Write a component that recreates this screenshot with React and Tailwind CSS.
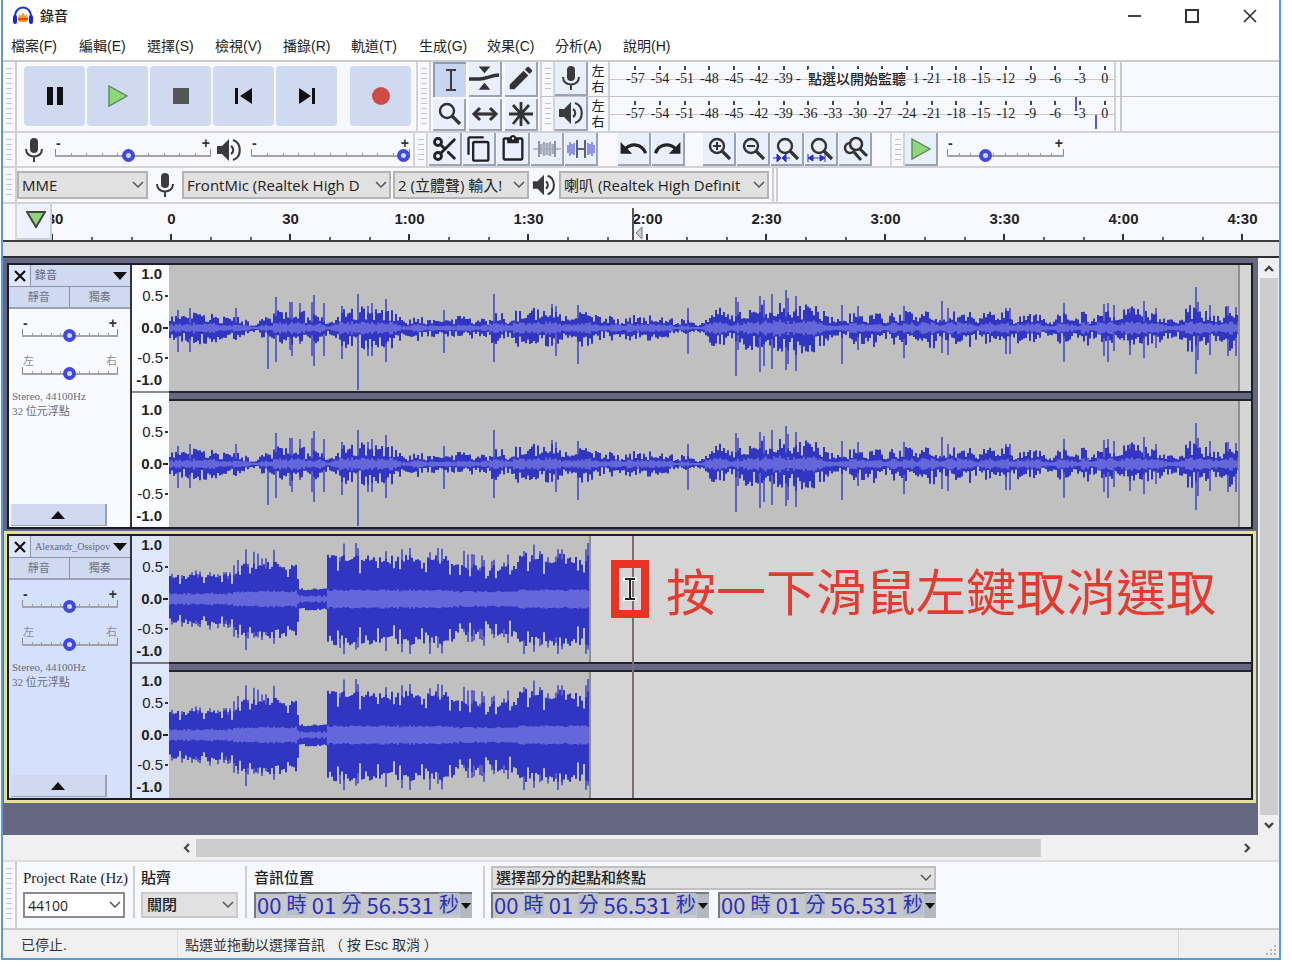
import React from "react";
import { MdContentCopy, MdContentPaste, MdEdit, MdRedo, MdUndo } from "react-icons/md";
import { Scissors } from "lucide-react";

const SANS = "font-['Liberation_Sans','Noto_Sans_CJK_TC',sans-serif]";
const SERIF = "font-['Liberation_Serif','Noto_Sans_CJK_TC',serif]";
const UI = "font-['Open_Sans','Noto_Sans_CJK_TC',sans-serif]";

/* ---------- waveform data ---------- */

function makeRandom(seed) {
  let s = seed;
  return () => {
    s = (s * 1664525 + 1013904223) % 4294967296;
    return s / 4294967296;
  };
}

function envelope(points, x) {
  for (let i = 1; i < points.length; i++) {
    if (x <= points[i][0]) {
      const [x0, y0] = points[i - 1];
      const [x1, y1] = points[i];
      return y0 + ((y1 - y0) * (x - x0)) / (x1 - x0);
    }
  }
  return points[points.length - 1][1];
}

const VOICE_ENV = [
  [0, 18], [20, 20], [30, 14], [75, 12], [87, 4], [92, 16], [120, 22], [130, 13], [152, 21], [158, 7],
  [175, 19], [210, 20], [222, 18], [230, 12], [270, 9], [320, 13], [370, 18], [410, 17], [450, 14],
  [490, 9], [530, 7], [542, 16], [565, 20], [620, 24], [660, 17], [730, 16], [800, 20], [808, 6],
  [815, 17], [870, 13], [880, 12], [930, 16], [970, 23], [1005, 7], [1020, 20], [1069, 21],
];

const VOICE_SPIKES = [
  [8, 18, 24], [20, 20, 24], [66, 20, 12], [98, 10, 41], [106, 31, 34], [120, 26, 22], [122, 26, 28],
  [130, 25, 16], [142, 26, 28], [144, 33, 38], [154, 25, 28], [172, 22, 31], [182, 18, 16], [188, 34, 62],
  [198, 22, 28], [202, 25, 28], [216, 29, 34], [274, 18, 25], [324, 34, 34], [382, 24, 18], [386, 22, 28],
  [408, 23, 36], [518, 20, 26], [566, 31, 48], [568, 26, 22], [590, 32, 44], [594, 28, 38], [602, 34, 41],
  [616, 38, 42], [618, 30, 36], [626, 32, 43], [672, 23, 36], [688, 22, 22], [734, 22, 30], [772, 27, 25],
  [778, 20, 27], [836, 20, 26], [840, 20, 26], [894, 25, 34], [934, 24, 28], [938, 25, 34], [944, 23, 23],
  [960, 20, 27], [974, 27, 30], [986, 20, 20], [1026, 41, 46], [1028, 26, 32], [1040, 23, 27],
  [1058, 22, 28], [1066, 21, 28],
];

const MUSIC_ENV = [
  [0, 22], [60, 24], [72, 34], [126, 35], [130, 10], [156, 10], [158, 41], [280, 41], [288, 33],
  [345, 33], [350, 43], [419, 41],
];

function voiceBars() {
  const rnd = makeRandom(77);
  const spikes = new Map(VOICE_SPIKES.map(([x, u, d]) => [x, [u, d]]));
  const peak = [];
  const thin = [];
  const core = [];
  let burst = 0.8;
  for (let x = 0; x < 1069; x += 2) {
    const e = envelope(VOICE_ENV, x);
    if (x % 8 === 0) burst = 0.5 + rnd() * 0.5;
    const up = e * burst * (0.4 + rnd() * 0.85);
    const down = e * burst * (0.4 + rnd() * 0.9);
    if (spikes.has(x)) thin.push([x, ...spikes.get(x)]);
    peak.push([x, Math.max(2, up), Math.max(2, down)]);
    const c = Math.max(1, e * burst * (0.2 + 0.2 * rnd()));
    core.push([x, c, c]);
  }
  return { peak, thin, core };
}

function musicBars() {
  const rnd = makeRandom(4242);
  const peak = [];
  const thin = [];
  const core = [];
  for (let x = 0; x < 419; x += 2) {
    const e = envelope(MUSIC_ENV, x);
    let up = e * (0.84 + rnd() * 0.24);
    let down = e * (0.88 + rnd() * 0.26);
    const r = rnd();
    const reach = x < 62 ? 2 : 14;
    if (r > 0.74 && e > 20) {
      thin.push([x, Math.min(56, up + 2 + rnd() * reach), Math.min(55, down + 3 + rnd() * reach * 0.8)]);
    } else if (r < 0.1 && e > 20) {
      up *= 0.7;
      down *= 0.72;
    }
    peak.push([x, up, down]);
    const c = Math.max(2, e * 0.19 + rnd() * 2);
    core.push([x, c, c]);
  }
  return { peak, thin, core };
}

function barsToPath(bars) {
  return bars
    .map(([x, u, d]) => `M${x} ${(63 - u).toFixed(1)}h2V${(63 + d).toFixed(1)}h-2z`)
    .join("");
}

function makeClip(width, bars) {
  return { width, peak: barsToPath(bars.peak), thin: barsToPath(bars.thin), core: barsToPath(bars.core) };
}

const VOICE = makeClip(1069, voiceBars());
const MUSIC = makeClip(420, musicBars());

function Wave({ clip }) {
  return (
    <div className="flex h-[126px] overflow-hidden bg-[#d5d5d5]">
      <svg
        width={clip.width}
        height="126"
        viewBox={`0 0 ${clip.width} 126`}
        className="box-content shrink-0 border-r-2 border-[#8f8f8f] bg-[#c0c0c0]"
        aria-hidden="true"
      >
        <path d={clip.thin} fill="#5f62c2" />
        <path d={clip.peak} fill="#3036c2" />
        <path d={clip.core} fill="#6467da" />
      </svg>
    </div>
  );
}

/* ---------- icons ---------- */

function Mic({ size = 26 }) {
  return (
    <svg width={size} height={size} viewBox="0 0 26 26" aria-hidden="true">
      <rect x="9" y="1" width="8" height="15" rx="4" fill="#3b3b3b" />
      <path d="M5 12c0 10 16 10 16 0M13 19v6" fill="none" stroke="#3b3b3b" strokeWidth="2" />
    </svg>
  );
}

function Speaker({ size = 26 }) {
  return (
    <svg width={size} height={size} viewBox="0 0 26 26" aria-hidden="true">
      <path d="M1 9h5l7-7v22l-7-7H1z" fill="#3b3b3b" />
      <path d="M15 9c3 2 3 6 0 8M17 3c9 3 9 17 0 20" fill="none" stroke="#3b3b3b" strokeWidth="2.2" />
    </svg>
  );
}

function Headphones() {
  return (
    <svg width="22" height="20" viewBox="0 0 22 20" aria-hidden="true">
      <path d="M6 13l1-5 2 2 2-4 2 4 2-2 1 5-1 3H7z" fill="#f5a11c" />
      <path d="M6 13h10" stroke="#e6491d" strokeWidth="2.4" />
      <path d="M3 12C2 -2 20 -2 19 12" fill="none" stroke="#1f2fd0" strokeWidth="2" />
      <rect x="1" y="9" width="4" height="9" rx="2" fill="#1b27d6" />
      <rect x="17" y="9" width="4" height="9" rx="2" fill="#1b27d6" />
    </svg>
  );
}

function PlayIcon({ w = 20, h = 22 }) {
  return (
    <svg width={w} height={h} viewBox="0 0 20 22" aria-hidden="true">
      <path d="M1 1l18 10L1 21z" fill="#8ed67b" stroke="#5a8a52" strokeWidth="1.4" />
    </svg>
  );
}

function IBeam() {
  return (
    <svg width="14" height="26" viewBox="0 0 14 26" aria-hidden="true">
      <path d="M2 3h4l1 1 1-1h4M7 4v18M2 23h4l1-1 1 1h4" fill="none" stroke="#3b3b3b" strokeWidth="2" />
    </svg>
  );
}

function EnvelopeIcon() {
  return (
    <svg width="32" height="28" viewBox="0 0 32 28" aria-hidden="true">
      <path d="M10 2h12l-6 7zM10 26h12l-6-7z" fill="#333" />
      <path d="M0 15h11c7 0 12-4 20-4" fill="none" stroke="#333" strokeWidth="3.6" />
    </svg>
  );
}

function Glass({ children, color = "#333" }) {
  return (
    <svg width="28" height="28" viewBox="0 0 28 28" aria-hidden="true">
      <circle cx="12" cy="11" r="7" fill="none" stroke={color} strokeWidth="2.4" />
      <path d="M17 16l8 8" stroke={color} strokeWidth="3.2" />
      {children}
    </svg>
  );
}

function ShiftIcon() {
  return (
    <svg width="28" height="16" viewBox="0 0 28 16" aria-hidden="true">
      <path d="M4 8h20" stroke="#333" strokeWidth="3.2" />
      <path d="M9 2L3 8l6 6M19 2l6 6-6 6" fill="none" stroke="#333" strokeWidth="3" />
    </svg>
  );
}

function StarIcon() {
  return (
    <svg width="26" height="26" viewBox="0 0 26 26" aria-hidden="true">
      <path d="M13 1v24M1 13h24M5 4l8 9 8-9M5 23l8-10 8 10" fill="none" stroke="#333" strokeWidth="2.8" />
    </svg>
  );
}

function TrimIcon() {
  return (
    <svg width="28" height="20" viewBox="0 0 28 20" aria-hidden="true">
      <path d="M0 10h28" stroke="#a3a9b8" strokeWidth="1.5" />
      <path d="M8 5v10M11 3v14M14 4v12M17 3v14M20 5v10" stroke="#a5abbc" strokeWidth="2.6" />
      <path d="M6 2v16M22 2v16" stroke="#858b9c" strokeWidth="1.8" />
    </svg>
  );
}

function SilenceIcon() {
  return (
    <svg width="28" height="20" viewBox="0 0 28 20" aria-hidden="true">
      <path d="M1 6v8M3 3v14M5 5v10M7 4v12M21 4v12M23 5v10M25 3v14M27 6v8" stroke="#8c94ea" strokeWidth="2" />
      <path d="M10 1v18M18 1v18M10 10h8" stroke="#5a6078" strokeWidth="2" />
    </svg>
  );
}

function ZoomToggleIcon() {
  return (
    <svg width="28" height="28" viewBox="0 0 28 28" aria-hidden="true">
      <circle cx="9" cy="13" r="5" fill="none" stroke="#333" strokeWidth="2.4" />
      <circle cx="15" cy="9" r="6" fill="#e9effd" stroke="#333" strokeWidth="2.6" />
      <path d="M19 14l7 7M13 17l7 8" stroke="#333" strokeWidth="3" />
    </svg>
  );
}

function Chevron() {
  return (
    <svg width="12" height="8" viewBox="0 0 12 8" className="pointer-events-none absolute top-1/2 right-1 -translate-y-1/2" aria-hidden="true">
      <path d="M1 1l5 5 5-5" fill="none" stroke="#555" strokeWidth="1.5" />
    </svg>
  );
}

/* ---------- controls ---------- */

function Grip({ first = false }) {
  return (
    <div
      className={
        first
          ? "flex w-[14px] shrink-0 justify-center border-r-2 border-[#cfcfd3] py-[6px]"
          : "flex w-[15px] shrink-0 justify-center border-x-2 border-[#d4d4d8] py-[6px]"
      }
    >
      <div className="w-[6px] bg-[repeating-linear-gradient(to_bottom,#c4c4c8_0px,#c4c4c8_1px,transparent_1px,transparent_5px)]" />
    </div>
  );
}

function ToolButton({ label, active = false, children }) {
  return (
    <button
      type="button"
      aria-label={label}
      className={
        active
          ? "flex w-[33px] shrink-0 items-center justify-center self-stretch border-t-2 border-l-2 border-[#8d9cba] bg-[#c7d5f0]"
          : "flex w-[33px] shrink-0 items-center justify-center self-stretch border-r-2 border-b-2 border-[#9ba3b8] bg-[#e9effd]"
      }
    >
      {children}
    </button>
  );
}

function BigButton({ label, className = "", children }) {
  return (
    <button
      type="button"
      aria-label={label}
      className={`flex h-[60px] w-[61px] items-center justify-center rounded-[4px] bg-[#cfd9f0] ${className}`}
    >
      {children}
    </button>
  );
}

function Slider({ label, value, left = "-", right = "+", className, labelClass = "text-[14px] font-bold text-[#333]", ticks = 11 }) {
  return (
    <div className={`grid h-[27px] shrink-0 ${SANS} ${className}`}>
      <div className={`flex justify-between self-start px-px leading-[14px] [grid-area:1/1] ${labelClass}`}>
        <span>{left}</span>
        <span>{right}</span>
      </div>
      <div className="mb-[6px] flex h-[5px] items-end justify-between self-end border-b-2 border-[#a3a3a3] [grid-area:1/1]">
        {Array.from({ length: ticks }, (_, i) => (
          <i key={i} className={i === 0 || i === ticks - 1 ? "h-[6px] w-px shrink-0 bg-[#888]" : "h-[2px] w-px bg-[#999]"} />
        ))}
      </div>
      <input
        type="range"
        aria-label={label}
        min="0"
        max="100"
        defaultValue={value}
        className="h-4 w-full cursor-pointer appearance-none self-end bg-transparent [grid-area:1/1] [&::-webkit-slider-thumb]:size-[13px] [&::-webkit-slider-thumb]:appearance-none [&::-webkit-slider-thumb]:rounded-full [&::-webkit-slider-thumb]:border-[4px] [&::-webkit-slider-thumb]:border-[#3f49de] [&::-webkit-slider-thumb]:bg-[#d0d4f5]"
      />
    </div>
  );
}

function Select({ label, value, className }) {
  return (
    <div className={`relative h-[28px] shrink-0 ${className}`}>
      <select
        aria-label={label}
        defaultValue={value}
        className={`h-full w-full appearance-none border-2 border-[#b4b4b4] bg-[#e1e1e1] pr-5 pl-[3px] text-[15px] whitespace-nowrap text-[#222] ${UI}`}
      >
        <option>{value}</option>
      </select>
      <Chevron />
    </div>
  );
}

const DB = Array.from({ length: 20 }, (_, i) => -57 + i * 3);
/* Labels that the monitoring prompt covers in the recording meter. */
const DB_PROMPT = { "-36": "-", "-33": "", "-30": "", "-27": "", "-24": "1" };

function Meter({ label, icon, prompt = false, children }) {
  return (
    <div className="flex h-[34px]">
      <Grip />
      <button type="button" aria-label={label} className="flex w-[33px] shrink-0 items-center justify-center border-r-2 border-b-2 border-[#9ba3b8] bg-[#e9effd]">
        {icon}
      </button>
      <div className="flex w-[20px] shrink-0 flex-col items-center justify-center text-[13px] leading-4 text-[#222]">
        <span>左</span>
        <span>右</span>
      </div>
      <div className="relative w-[508px] shrink-0 border-x-2 border-[#d0d0d4]">
        <div className="absolute inset-x-0 top-[17px] h-px bg-[#c8c8cc]" />
        <div className={`relative ml-[13px] grid w-[494px] grid-cols-20 text-[14px] text-[#222] ${SERIF}`}>
          {DB.map((v) => {
            const covered = prompt && v in DB_PROMPT;
            return (
              <div key={v} className="flex flex-col items-center pt-1">
                <i className="h-[4px] w-[2px] bg-[#444]" />
                <span className={covered ? (v === -36 ? "self-start leading-[18px]" : "self-end leading-[18px]") : "leading-[18px]"}>
                  {covered ? DB_PROMPT[v] : v}
                </span>
              </div>
            );
          })}
        </div>
        {children}
      </div>
      <div className="w-[6px] shrink-0 border-r-2 border-[#c9c9cd]" />
    </div>
  );
}

function TimeField({ label }) {
  const digits = "text-[22px]";
  const unit = "bg-[#b9bfca] text-[20px]";
  return (
    <div
      role="group"
      aria-label={label}
      className="flex h-[26px] w-[218px] shrink-0 items-stretch border-t-2 border-l-2 border-[#77797f] bg-[#c6c8cc] text-[#2b2fb4] font-['Noto_Sans_CJK_TC',sans-serif]"
    >
      <div className="flex flex-1 items-center justify-between px-px pb-1 leading-[22px]">
        <span className={digits}>00</span>
        <span className={unit}>時</span>
        <span className={digits}>01</span>
        <span className={unit}>分</span>
        <span className={digits}>56.531</span>
        <span className={unit}>秒</span>
      </div>
      <button type="button" aria-label={`${label} 格式`} className="flex w-[12px] items-center justify-center bg-[#b4b8c2]">
        <svg width="10" height="6" viewBox="0 0 10 6" aria-hidden="true">
          <path d="M0 0h10L5 6z" fill="#111" />
        </svg>
      </button>
    </div>
  );
}

/* ---------- tracks ---------- */

function ScaleLabels({ selected }) {
  const row = "flex h-[18px] items-center justify-end pr-px";
  return (
    <div className={`h-[126px] text-[15px] leading-[18px] text-[#222] ${SANS} ${selected ? "bg-[#dfe7fd]" : "bg-[#fbfcff]"}`}>
      <div className={`${row} font-bold`}>1.0<i className="ml-[2px] w-[4px]" /></div>
      <div className={`${row} mt-1`}>0.5<i className="ml-[2px] h-[2px] w-[3px] bg-[#333]" /></div>
      <div className={`${row} mt-[14px] font-bold`}>0.0<i className="ml-px h-[2px] w-[5px] bg-[#222]" /></div>
      <div className={`${row} mt-3`}>-0.5<i className="ml-[2px] h-[2px] w-[3px] bg-[#333]" /></div>
      <div className={`${row} mt-1 font-bold`}>-1.0<i className="ml-[2px] w-[4px]" /></div>
    </div>
  );
}

function Track({ name, clip, selected = false, children }) {
  const bg = selected ? "bg-[#d5e0fd]" : "bg-[#f9faff]";
  return (
    <section aria-label={name} className="relative flex border-2 border-[#1c1c28]">
      <div className={`flex w-[123px] shrink-0 flex-col border-r-2 border-[#333] ${bg}`}>
        <div className="flex h-[22px] items-stretch border-b border-[#8c93a8] bg-[#cfd9f0]">
          <button type="button" aria-label="關閉軌道" className="flex w-[22px] shrink-0 items-center justify-center border-r border-[#8c93a8] bg-[#dfe6f7]">
            <svg width="12" height="12" viewBox="0 0 12 12" aria-hidden="true">
              <path d="M1 1l10 10M11 1L1 11" stroke="#111" strokeWidth="2.2" />
            </svg>
          </button>
          <button type="button" className={`flex min-w-0 flex-1 items-center justify-between pr-[3px] pl-1 text-[#5c6884] ${SERIF} ${selected ? "text-[10px]" : "text-[11px]"}`}>
            <span className="whitespace-nowrap">{name}</span>
            <svg width="14" height="8" viewBox="0 0 14 8" className="shrink-0" aria-hidden="true">
              <path d="M0 0h14L7 8z" fill="#111" />
            </svg>
          </button>
        </div>
        <div className="grid h-[22px] grid-cols-2 border-b-2 border-[#9aa2b6] bg-[#cfd9f0] text-[11px] text-[#6d7588]">
          <button type="button" className="border-r border-[#8c93a8]">靜音</button>
          <button type="button">獨奏</button>
        </div>
        <div className="flex flex-col gap-[11px] px-[13px] pt-[7px]">
          <Slider label={`${name} 增益`} value={49} className="w-[96px]" />
          <Slider
            label={`${name} 左右平衡`}
            value={49}
            left="左"
            right="右"
            className="w-[96px]"
            labelClass="text-[11px] text-[#8b8f99]"
          />
        </div>
        <p className={`pt-[8px] pl-[3px] text-[11px] leading-[15px] text-[#666c7a] ${SERIF}`}>
          Stereo, 44100Hz
          <br />
          32 位元浮點
        </p>
        <button type="button" aria-label="收合軌道" className="mt-auto mb-px ml-[2px] flex h-[22px] w-[96px] items-center justify-center border-r-2 border-b border-[#9aa2b6] bg-[#cfd9f0]">
          <svg width="14" height="8" viewBox="0 0 14 8" aria-hidden="true">
            <path d="M0 8h14L7 0z" fill="#111" />
          </svg>
        </button>
      </div>
      <div className="w-[37px] shrink-0">
        <ScaleLabels selected={selected} />
        <div className={selected ? "h-[10px] border-t-2 border-[#77777f] bg-[#dfe7fd]" : "h-[10px] border-t-2 border-[#8d8d8d] bg-[#fbfcff]"} />
        <ScaleLabels selected={selected} />
      </div>
      <div className="min-w-0 flex-1">
        <Wave clip={clip} />
        <div className="h-[10px] border-y-2 border-[#24242f] bg-[#666884]" />
        <Wave clip={clip} />
      </div>
      {children}
    </section>
  );
}

const MENUS = ["檔案(F)", "編輯(E)", "選擇(S)", "檢視(V)", "播錄(R)", "軌道(T)", "生成(G)", "效果(C)", "分析(A)", "說明(H)"];
const TIMES = ["-30", "0", "30", "1:00", "1:30", "2:00", "2:30", "3:00", "3:30", "4:00", "4:30"];

export default function App() {
  return (
    <div className={`bg-white pr-[11px] pb-[6px] pl-px ${SANS}`}>
      <main className="flex flex-col overflow-hidden border-x-2 border-b-2 border-[#5b9bd5] bg-[#f8f9ff]">
        {/* title bar */}
        <header className="flex h-8 items-center bg-white pl-[9px]">
          <Headphones />
          <h1 className="ml-[6px] flex-1 text-[14px] font-medium text-[#222]">錄音</h1>
          <button type="button" aria-label="最小化" className="flex h-full w-[58px] items-center justify-center">
            <span className="h-[2px] w-[13px] bg-[#444]" />
          </button>
          <button type="button" aria-label="最大化" className="flex h-full w-[58px] items-center justify-center">
            <span className="size-[14px] border-2 border-[#333]" />
          </button>
          <button type="button" aria-label="關閉" className="flex h-full w-[58px] items-center justify-center">
            <svg width="14" height="14" viewBox="0 0 14 14" aria-hidden="true">
              <path d="M1 1l12 12M13 1L1 13" stroke="#333" strokeWidth="1.7" />
            </svg>
          </button>
        </header>

        <nav className="flex h-[30px] items-center border-b-2 border-[#cacaca] bg-white pl-2">
          {MENUS.map((m) => (
            <button key={m} type="button" className="w-[68px] text-left text-[14px] text-[#222]">
              {m}
            </button>
          ))}
        </nav>

        {/* transport, tools and meters */}
        <div className="flex h-[71px] border-b-2 border-[#d3d3d6]">
          <Grip first />
          <div className="flex shrink-0 gap-[2px] pt-1 pr-[5px] pl-[7px]">
            <BigButton label="暫停">
              <svg width="16" height="18" viewBox="0 0 16 18" aria-hidden="true">
                <path d="M0 0h6v18H0zM10 0h6v18h-6z" fill="#111" />
              </svg>
            </BigButton>
            <BigButton label="播放"><PlayIcon /></BigButton>
            <BigButton label="停止">
              <span className="size-[16px] bg-[#555]" />
            </BigButton>
            <BigButton label="跳至開頭">
              <svg width="18" height="16" viewBox="0 0 18 16" aria-hidden="true">
                <path d="M0 0h3v16H0zM17 0v16L5 8z" fill="#111" />
              </svg>
            </BigButton>
            <BigButton label="跳至結尾">
              <svg width="18" height="16" viewBox="0 0 18 16" aria-hidden="true">
                <path d="M14 0h3v16h-3zM1 0v16l12-8z" fill="#111" />
              </svg>
            </BigButton>
            <BigButton label="錄音" className="ml-[11px]">
              <span className="size-[18px] rounded-full bg-[#cd4a49]" />
            </BigButton>
          </div>
          <Grip />
          <div className="grid shrink-0 grid-cols-3 gap-x-[3px] gap-y-[2px] px-[2px]">
            <ToolButton label="選取工具" active><IBeam /></ToolButton>
            <ToolButton label="波封工具"><EnvelopeIcon /></ToolButton>
            <ToolButton label="繪製工具"><MdEdit size={30} color="#333" /></ToolButton>
            <ToolButton label="縮放工具"><Glass /></ToolButton>
            <ToolButton label="時間移動工具"><ShiftIcon /></ToolButton>
            <ToolButton label="多重工具"><StarIcon /></ToolButton>
          </div>
          <div className="min-w-0 flex-1">
            <div className="border-b border-[#c2c2c6]">
              <Meter label="錄音音量計" icon={<Mic />} prompt>
                <button type="button" className="absolute top-[7px] left-[198px] h-[20px] w-[98px] bg-[#f8f9ff] text-[14px] leading-[20px] font-medium whitespace-nowrap text-[#222]">
                  點選以開始監聽
                </button>
              </Meter>
            </div>
            <Meter label="播放音量計" icon={<Speaker />}>
              <i className="absolute top-0 left-[465px] h-[14px] w-[2px] bg-[#5558e0]" />
              <i className="absolute top-[18px] left-[485px] h-[14px] w-[2px] bg-[#5558e0]" />
            </Meter>
          </div>
        </div>

        {/* mixer, edit and play-at-speed */}
        <div className="flex h-[35px] border-b-2 border-[#d3d3d6]">
          <Grip first />
          <div className="flex w-[396px] shrink-0 items-center pl-[4px]">
            <Mic />
            <Slider label="錄音音量" value={47} className="ml-[8px] w-[156px]" />
            <div className="ml-[5px]"><Speaker /></div>
            <Slider label="播放音量" value={100} className="ml-[9px] w-[159px]" />
          </div>
          <Grip />
          <div className="flex gap-px pl-px">
            <ToolButton label="剪下"><Scissors size={28} color="#222" strokeWidth={2.4} /></ToolButton>
            <ToolButton label="複製"><MdContentCopy size={28} color="#222" /></ToolButton>
            <ToolButton label="貼上"><MdContentPaste size={28} color="#222" /></ToolButton>
            <ToolButton label="修剪音訊"><TrimIcon /></ToolButton>
            <ToolButton label="靜音音訊"><SilenceIcon /></ToolButton>
          </div>
          <div className="flex gap-px pl-5">
            <ToolButton label="復原"><MdUndo size={31} color="#222" /></ToolButton>
            <ToolButton label="重做"><MdRedo size={31} color="#222" /></ToolButton>
          </div>
          <div className="flex gap-px pr-[18px] pl-[18px]">
            <ToolButton label="放大">
              <Glass><path d="M8 11h8M12 7v8" stroke="#333" strokeWidth="2" /></Glass>
            </ToolButton>
            <ToolButton label="縮小">
              <Glass><path d="M8 11h8" stroke="#333" strokeWidth="2" /></Glass>
            </ToolButton>
            <ToolButton label="符合選取部分">
              <Glass><path d="M0 23h5M12 23h5M4 19l4 4-4 4zM13 19l-4 4 4 4z" stroke="#2c31c8" fill="#2c31c8" /></Glass>
            </ToolButton>
            <ToolButton label="符合專案">
              <Glass><path d="M1 19v8M18 19v8M4 23h12M6 20l-5 3 5 3zM13 20l5 3-5 3z" stroke="#2c31c8" fill="#2c31c8" /></Glass>
            </ToolButton>
            <ToolButton label="縮放切換"><ZoomToggleIcon /></ToolButton>
          </div>
          <Grip />
          <ToolButton label="以指定速度播放"><PlayIcon /></ToolButton>
          <Slider label="播放速度" value={31} className="ml-[9px] w-[117px] self-center" />
        </div>

        {/* devices */}
        <div className="flex h-9 border-b-2 border-[#d3d3d6]">
          <Grip first />
          <div className="flex shrink-0 items-center border-r-2 border-[#cfcfd3] pr-[3px]">
            <Select label="音訊主機" value="MME" className="w-[131px]" />
            <div className="mx-[4px]"><Mic /></div>
            <Select label="錄音裝置" value="FrontMic (Realtek High D" className="w-[209px]" />
            <Select label="錄音聲道" value="2 (立體聲) 輸入!" className="ml-[2px] w-[136px]" />
            <div className="mx-[3px]"><Speaker size={24} /></div>
            <Select label="播放裝置" value="喇叭 (Realtek High Definit" className="w-[210px]" />
          </div>
          <div className="w-[4px] border-r-2 border-[#cfcfd3]" />
        </div>

        {/* timeline */}
        <div className="flex h-[38px] border-b-2 border-[#3c3c3c]">
          <div className="w-[14px] shrink-0 border-r-2 border-[#d6d6da]" />
          <button type="button" aria-label="釘選播放頭" className="flex w-[35px] shrink-0 items-center justify-center border-r-2 border-b-2 border-[#c9d0e0] bg-[#edf2fe] pb-1 pl-1">
            <svg width="20" height="17" viewBox="0 0 20 17" aria-hidden="true">
              <path d="M1 1h18l-9 15z" fill="#8ed67b" stroke="#444" strokeWidth="2" />
            </svg>
          </button>
          <div className="relative min-w-0 flex-1 overflow-hidden">
            <div className="-ml-[59px] flex h-full">
              {TIMES.map((t) => (
                <div key={t} className="flex w-[119px] shrink-0 flex-col justify-between pt-[6px] text-center text-[15px] leading-[18px] font-bold text-[#222]">
                  {t}
                  <div className="grid grid-cols-3 items-end justify-items-center">
                    <i className="h-[3px] w-[2px] bg-[#666]" />
                    <i className="h-[6px] w-[2px] bg-[#333]" />
                    <i className="h-[3px] w-[2px] bg-[#666]" />
                  </div>
                </div>
              ))}
            </div>
            <i className="absolute top-1 bottom-0 left-[580px] w-[2px] bg-[#555]" />
            <svg width="8" height="14" viewBox="0 0 8 14" className="absolute bottom-0 left-[583px]" aria-hidden="true">
              <path d="M7 1v12L1 7z" fill="#ccc" stroke="#777" />
            </svg>
          </div>
        </div>
        <div className="h-4 border-b-2 border-[#2f2f33] bg-[#e4e4e4]" />

        {/* track area */}
        <div className="flex">
          <div className="min-w-0 flex-1 bg-[#666881] pt-[5px] pb-[32px]">
            <div className="mr-[5px] ml-1">
              <Track name="錄音" clip={VOICE} />
            </div>
            <div className="mt-[2px] mr-[2px] ml-px border-[3px] border-[#e5e294]">
              <Track name="Alexandr_Ossipov" clip={MUSIC} selected>
                <i className="absolute top-0 bottom-0 left-[623px] w-[2px] bg-[#7d6c70]" />
                <div className="absolute top-[24px] left-[602px] flex h-[58px] w-[38px] items-center justify-center border-[8px] border-[#ea3323]">
                  <svg width="14" height="24" viewBox="0 0 14 24" aria-hidden="true">
                    <path d="M0 0h14v4H9v16h5v4H0v-4h5V4H0z" fill="#f4f4f4" />
                    <path d="M2 2h10M7 2v20M2 22h10" stroke="#222" strokeWidth="2" />
                  </svg>
                </div>
                <p className="absolute top-[23px] left-[657px] text-[50px] leading-[60px] whitespace-nowrap text-[#e23b30] font-['Noto_Sans_CJK_TC',sans-serif]">
                  按一下滑鼠左鍵取消選取
                </p>
              </Track>
            </div>
          </div>
          <div className="flex w-[21px] shrink-0 flex-col items-center bg-[#f0f0f0] pl-px">
            <button type="button" aria-label="向上捲動" className="flex h-5 w-full items-center justify-center">
              <svg width="10" height="7" viewBox="0 0 10 7" aria-hidden="true">
                <path d="M1 6l4-4 4 4" fill="none" stroke="#444" strokeWidth="2.4" />
              </svg>
            </button>
            <div className="w-[18px] flex-1 bg-[#cdcdcd]" />
            <button type="button" aria-label="向下捲動" className="flex h-5 w-full items-center justify-center">
              <svg width="10" height="7" viewBox="0 0 10 7" aria-hidden="true">
                <path d="M1 1l4 4 4-4" fill="none" stroke="#444" strokeWidth="2.4" />
              </svg>
            </button>
          </div>
        </div>

        <div className="flex h-[27px] items-center border-b-2 border-[#dedee2] bg-[#f0f0f0] pr-6 pl-[173px]">
          <button type="button" aria-label="向左捲動" className="flex h-full w-5 items-center justify-center">
            <svg width="7" height="10" viewBox="0 0 7 10" aria-hidden="true">
              <path d="M6 1L2 5l4 4" fill="none" stroke="#444" strokeWidth="2.2" />
            </svg>
          </button>
          <div className="flex h-[18px] flex-1">
            <div className="w-[81%] bg-[#cdcdcd]" />
          </div>
          <button type="button" aria-label="向右捲動" className="flex h-full w-4 items-center justify-center">
            <svg width="7" height="10" viewBox="0 0 7 10" aria-hidden="true">
              <path d="M1 1l4 4-4 4" fill="none" stroke="#444" strokeWidth="2.2" />
            </svg>
          </button>
        </div>

        {/* selection toolbar */}
        <div className="flex h-[68px] border-b-2 border-[#cbcbcf] text-[15px] text-[#222]">
          <Grip first />
          <div className="flex items-start pt-1 pl-[6px]">
            <div className="flex w-[112px] flex-col gap-[2px] border-r-2 border-[#cfcfd3]">
              <label htmlFor="rate" className={`h-[24px] text-[15px] leading-6 whitespace-nowrap ${SERIF}`}>Project Rate (Hz)</label>
              <div className="relative h-[26px] w-[102px]">
                <select id="rate" defaultValue="44100" className={`h-full w-full appearance-none border-2 border-[#8b8b8f] bg-white pl-[3px] text-[14px] ${UI}`}>
                  <option>44100</option>
                </select>
                <Chevron />
              </div>
            </div>
            <div className="ml-[6px] flex w-[106px] flex-col gap-[2px] border-r-2 border-[#cfcfd3]">
              <label htmlFor="snap" className="h-[24px] leading-6 font-medium">貼齊</label>
              <div className="relative h-[26px] w-[97px]">
                <select id="snap" defaultValue="關閉" className="h-full w-full appearance-none border-2 border-[#cacaca] bg-[#e1e1e1] pl-1 text-[15px] font-medium">
                  <option>關閉</option>
                </select>
                <Chevron />
              </div>
            </div>
            <div className="ml-[7px] flex w-[231px] flex-col gap-[2px] border-r-2 border-[#cfcfd3]">
              <span className="h-[24px] leading-6 font-medium">音訊位置</span>
              <TimeField label="音訊位置" />
            </div>
            <div className="ml-[6px] flex flex-col gap-[2px]">
              <div className="relative h-[24px]">
                <select aria-label="選取範圍類型" defaultValue="選擇部分的起點和終點" className="h-full w-full appearance-none border-2 border-[#c0c0c0] bg-[#e1e1e1] pl-[3px] text-[15px] leading-5 font-medium">
                  <option>選擇部分的起點和終點</option>
                </select>
                <Chevron />
              </div>
              <div className="flex gap-[9px]">
                <TimeField label="選取起點" />
                <TimeField label="選取終點" />
              </div>
            </div>
          </div>
        </div>

        {/* status bar */}
        <footer className="flex h-[28px] items-stretch bg-[#f0f0f0] text-[14px] leading-[30px] text-[#333]">
          <div className="w-[175px] border-r border-[#dcdcdc] pl-[18px]">已停止.</div>
          <div className="flex-1 border-r border-[#d4d4d4] pl-[7px] whitespace-pre">點選並拖動以選擇音訊 （ 按 Esc 取消 ）</div>
          <div className="flex w-[100px] items-end justify-end p-[2px]">
            <svg width="11" height="11" viewBox="0 0 11 11" aria-hidden="true">
              <path d="M8 0h2v2H8zM8 4h2v2H8zM4 4h2v2H4zM8 8h2v2H8zM4 8h2v2H4zM0 8h2v2H0z" fill="#b5b5b5" />
            </svg>
          </div>
        </footer>
      </main>
    </div>
  );
}
